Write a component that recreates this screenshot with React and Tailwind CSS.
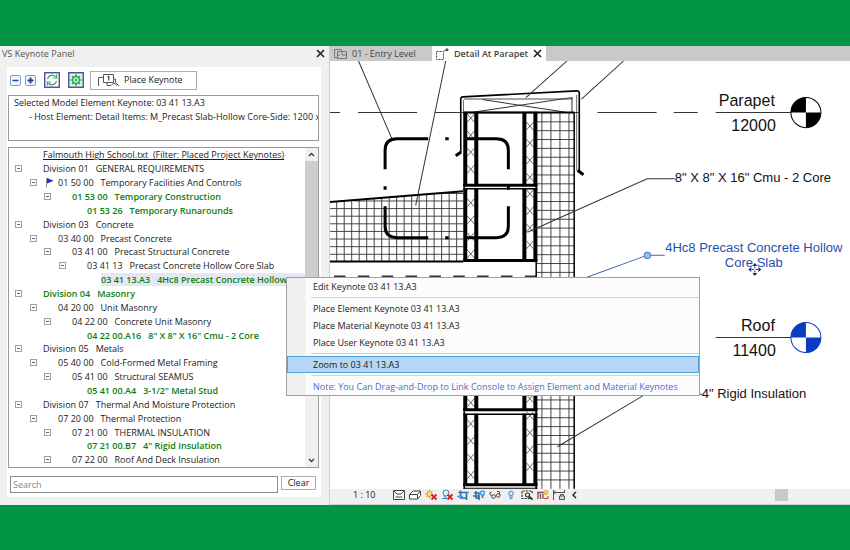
import clsx from "clsx";

const rows = [
  { level: 0, code: "Division 01", label: "GENERAL REQUIREMENTS", open: true },
  { level: 1, code: "01 50 00", label: "Temporary Facilities And Controls", open: true, flag: true },
  { level: 2, code: "01 53 00", label: "Temporary Construction", open: true, placed: true },
  { level: 3, code: "01 53 26", label: "Temporary Runarounds", placed: true },
  { level: 0, code: "Division 03", label: "Concrete", open: true },
  { level: 1, code: "03 40 00", label: "Precast Concrete", open: true },
  { level: 2, code: "03 41 00", label: "Precast Structural Concrete", open: true },
  { level: 3, code: "03 41 13", label: "Precast Concrete Hollow Core Slab", open: true },
  { level: 4, code: "03 41 13.A3", label: "4Hc8 Precast Concrete Hollow C", placed: true, selected: true },
  { level: 0, code: "Division 04", label: "Masonry", open: true, placed: true },
  { level: 1, code: "04 20 00", label: "Unit Masonry", open: true },
  { level: 2, code: "04 22 00", label: "Concrete Unit Masonry", open: true },
  { level: 3, code: "04 22 00.A16", label: '8" X 8" X 16" Cmu - 2 Core', placed: true },
  { level: 0, code: "Division 05", label: "Metals", open: true },
  { level: 1, code: "05 40 00", label: "Cold-Formed Metal Framing", open: true },
  { level: 2, code: "05 41 00", label: "Structural SEAMUS", open: true },
  { level: 3, code: "05 41 00.A4", label: '3-1/2" Metal Stud', placed: true },
  { level: 0, code: "Division 07", label: "Thermal And Moisture Protection", open: true },
  { level: 1, code: "07 20 00", label: "Thermal Protection", open: true },
  { level: 2, code: "07 21 00", label: "THERMAL INSULATION", open: true },
  { level: 3, code: "07 21 00.B7", label: '4" Rigid Insulation', placed: true },
  { level: 2, code: "07 22 00", label: "Roof And Deck Insulation", open: true },
];

const indents = ["pl-[6px]", "pl-[21px]", "pl-[35px]", "pl-[50px]", "pl-[64px]"];

function range(start, end, step) {
  const out = [];
  for (let v = start; v <= end; v += step) out.push(v);
  return out;
}

function CloseIcon() {
  return (
    <svg width="9" height="9" viewBox="0 0 9 9" stroke="#222" strokeWidth="1.6">
      <path d="M1 1L8 8M8 1L1 8" />
    </svg>
  );
}

function FlagIcon() {
  return (
    <svg width="9" height="11" viewBox="0 0 9 11">
      <path d="M1.5 1V10.5" stroke="#8a93a8" strokeWidth="1" />
      <path d="M2 1L8.5 3.7L2 6.5Z" fill="#1b2fc4" />
    </svg>
  );
}

function BoxIcon({ plus }) {
  return (
    <svg width="11" height="11" viewBox="0 0 11 11">
      <rect x="0.5" y="0.5" width="10" height="10" rx="1.5" fill="#f4f8ff" stroke="#7d9bd0" />
      <path d={plus ? "M2.5 5.5H8.5M5.5 2.5V8.5" : "M2.5 5.5H8.5"} stroke="#2a3fa8" strokeWidth={plus ? 2 : 1.5} />
    </svg>
  );
}

function RefreshIcon() {
  return (
    <svg width="16" height="16" viewBox="0 0 16 16" fill="none">
      <rect x="0.75" y="0.75" width="14.5" height="14.5" fill="#fff" stroke="#3e3e9c" strokeWidth="1.3" />
      <path d="M3.6 7A4.6 4.6 0 0 1 11.6 4.8M12.4 9A4.6 4.6 0 0 1 4.4 11.2" stroke="#3fa35f" strokeWidth="1.3" />
      <path d="M12.6 2.6V6H9.2M3.4 13.4V10H6.8" stroke="#3fa35f" strokeWidth="1.2" />
    </svg>
  );
}

function GearIcon() {
  return (
    <svg width="16" height="16" viewBox="0 0 16 16" fill="none">
      <rect x="0.75" y="0.75" width="14.5" height="14.5" fill="#dff5e4" stroke="#3e3e9c" strokeWidth="1.3" />
      <g stroke="#25ad4b">
        <circle cx="8" cy="8" r="3.4" strokeWidth="1.5" />
        <circle cx="8" cy="8" r="1.1" strokeWidth="1" />
        <path
          d="M8 2.3V4.4M8 11.6V13.7M2.3 8H4.4M11.6 8H13.7M4 4L5.4 5.4M10.6 10.6L12 12M12 4L10.6 5.4M5.4 10.6L4 12"
          strokeWidth="1.7"
        />
      </g>
    </svg>
  );
}

function PlaceIcon() {
  return (
    <svg width="22" height="14" viewBox="0 0 22 14" fill="none" stroke="#555" strokeWidth="1">
      <path d="M0.5 13V4.5H5" />
      <path d="M5.5 1.5H15.5V9.5H5.5Z" />
      <path d="M9.5 4L10.8 3V7.5" stroke="#222" />
      <path d="M9 9.5V12.5H13M15.5 6H17.5V9.5L21 13" />
      <path d="M13 12.5L15 10.5H17L18.5 12.5" />
    </svg>
  );
}

function TreeRow({ row }) {
  return (
    <li className={clsx("flex flex-1 items-center leading-[13px] whitespace-nowrap", indents[row.level])}>
      {row.open ? (
        <button type="button" aria-label="Collapse" className="h-[7px] w-[7px] shrink-0 border border-[#9aa0ac] bg-white">
          <span className="mx-auto block h-px w-[3px] bg-[#666]" />
        </button>
      ) : (
        <span className="w-[7px] shrink-0" />
      )}
      <span className="ml-2 flex w-[13px] shrink-0">{row.flag && <FlagIcon />}</span>
      <span
        className={clsx(
          "flex gap-[7px]",
          row.placed && "font-semibold text-[#0a800a]",
          row.selected && "min-w-0 flex-1 bg-[#e6e6f5]"
        )}
      >
        <span>{row.code}</span>
        <span>{row.label}</span>
      </span>
    </li>
  );
}

function KeynotePanel() {
  return (
    <aside className="flex w-[330px] shrink-0 flex-col border-r border-[#cfcfcf] bg-[#f0f0f0]">
      <header className="flex h-[21px] items-center justify-between pr-1 pb-[6px] pl-[2px] text-[#555]">
        <h1>VS Keynote Panel</h1>
        <button type="button" aria-label="Close panel">
          <CloseIcon />
        </button>
      </header>

      <div className="mr-2 mb-2 ml-[7px] flex flex-1 flex-col bg-white pr-[2px] pb-1 pl-px">
        <div className="flex h-7 items-center pb-[2px] pl-[2px]">
          <button type="button" aria-label="Collapse all">
            <BoxIcon />
          </button>
          <button type="button" aria-label="Expand all" className="ml-1">
            <BoxIcon plus />
          </button>
          <button type="button" aria-label="Refresh" className="ml-2">
            <RefreshIcon />
          </button>
          <button type="button" aria-label="Settings" className="ml-2">
            <GearIcon />
          </button>
          <button
            type="button"
            className="ml-[6px] flex h-[19px] w-[107px] items-center gap-1 border border-[#adadad] pl-[7px]"
          >
            <PlaceIcon />
            Place Keynote
          </button>
        </div>

        <div className="h-[46px] overflow-hidden border border-[#9a9a9a] pl-[5px] leading-[14px] whitespace-nowrap">
          <p>Selected Model Element Keynote: 03 41 13.A3</p>
          <p className="pl-[15px]">- Host Element: Detail Items: M_Precast Slab-Hollow Core-Side: 1200 x 2</p>
        </div>

        <div className="mt-[6px] flex flex-1 border border-[#9a9a9a]">
          <ul className="flex min-w-0 flex-1 flex-col">
            <li className="flex flex-1 items-center pl-[34px] leading-[13px] whitespace-pre underline">
              Falmouth High School.txt  (Filter: Placed Project Keynotes)
            </li>
            {rows.map((row) => (
              <TreeRow key={row.code} row={row} />
            ))}
          </ul>
          <div className="flex w-[13px] flex-col items-center justify-between bg-[#f0f0f0]">
            <svg width="13" height="13" viewBox="0 0 13 13" fill="none" stroke="#444" strokeWidth="1.5">
              <path d="M4 8L6.5 5.5L9 8" />
            </svg>
            <div className="mb-auto h-[140px] w-full bg-[#cdcdcd]" />
            <svg width="13" height="13" viewBox="0 0 13 13" fill="none" stroke="#444" strokeWidth="1.5">
              <path d="M4 5L6.5 7.5L9 5" />
            </svg>
          </div>
        </div>

        <div className="mt-2 flex items-start gap-[3px] pr-[3px] pl-[2px]">
          <input
            type="text"
            placeholder="Search"
            aria-label="Search"
            className="h-[17px] min-w-0 flex-1 border border-[#8c8c8c] px-[2px] placeholder:text-[#888]"
          />
          <button type="button" className="h-[14px] w-[35px] border border-[#adadad] leading-[12px]">
            Clear
          </button>
        </div>
      </div>
    </aside>
  );
}

function Block({ top, bottom }) {
  const height = bottom - top;
  return (
    <g>
      {[464, 475, 523, 534].map((x) => (
        <rect key={x} x={x} y={top} width="4" height={height} fill="#000" />
      ))}
      <path d={`M464 ${top + 0.5}H538`} stroke="#000" strokeWidth="1.5" />
      <path d={`M464 ${bottom - 1}H538`} stroke="#000" strokeWidth="3" />
    </g>
  );
}

function Crosses({ x, ys }) {
  return <path d={ys.map((y) => `M${x - 3.5} ${y - 4}l7 8m0 -8l-7 8`).join("")} stroke="#444" strokeWidth="0.8" />;
}

function LevelHead({ y, color, name, value }) {
  return (
    <g>
      <path d={`M716 ${y}H791`} stroke="#333" />
      <circle cx="806" cy={y} r="15" fill="#fff" stroke={color} strokeWidth="1" />
      <path d={`M806 ${y}V${y - 15}A15 15 0 0 0 791 ${y}ZM806 ${y}V${y + 15}A15 15 0 0 0 821 ${y}Z`} fill={color} />
      <g fontSize="16" textAnchor="end" fill="#111">
        <text x="775" y={y - 7}>
          {name}
        </text>
        <text x="776" y={y + 18}>
          {value}
        </text>
      </g>
    </g>
  );
}

function ParapetDetail() {
  const slabTop = (x) => 201.7 - (x - 331) * 0.08;

  return (
    <svg
      viewBox="331 61 519 427"
      preserveAspectRatio="xMinYMin slice"
      className="min-h-0 w-full flex-1 bg-white font-['Liberation_Sans',Arial,sans-serif]"
      fill="none"
      role="img"
      aria-label="Detail at parapet"
    >
      {/* slab hatch */}
      <g stroke="#333" strokeWidth="0.9">
        {range(337.7, 463, 7.48).map((x) => (
          <path key={x} d={`M${x} ${slabTop(x)}V261`} />
        ))}
        {range(208.3, 260, 7.6).map((y) => (
          <path key={y} d={`M331 ${y}H464`} />
        ))}
        <path d="M355 200.7H464M440 193.2H464" />
      </g>
      <path d="M331 201.7L464 191M331 261H464" stroke="#000" strokeWidth="2" />
      <path d="M335 275.8H537" stroke="#333" strokeWidth="1.5" strokeDasharray="11.5 12.3" />

      {/* rigid insulation */}
      <g stroke="#333" strokeWidth="0.9">
        {[542.5, 551.5, 560.5, 569.5].map((x) => (
          <path key={x} d={`M${x} 112V488`} />
        ))}
        {range(121.7, 280, 8.84).map((y) => (
          <path key={y} d={`M537 ${y}H575`} />
        ))}
        {range(399.3, 487, 8.87).map((y) => (
          <path key={y} d={`M537 ${y}H575`} />
        ))}
      </g>
      <path d="M536.8 112V488M574.7 112V488" stroke="#000" strokeWidth="1.5" />

      {/* masonry */}
      <Crosses x={471.5} ys={range(118, 180, 17)} />
      <Crosses x={530.5} ys={range(126, 180, 17)} />
      <Crosses x={471.5} ys={range(202.5, 257, 17)} />
      <Crosses x={530.5} ys={range(193.5, 257, 17)} />
      <Crosses x={471.5} ys={[402, 423, 440, 457, 474]} />
      <Crosses x={530.5} ys={[398, 415, 432, 449, 466]} />
      <Block top={112} bottom={186} />
      <Block top={188} bottom={261} />
      <Block top={380} bottom={410} />
      <Block top={413} bottom={485} />
      <path d="M464 487.5H538" stroke="#000" />
      <path d="M465 184V190M537 184V190M465 408V414M537 408V414M465 484V488M537 484V488" stroke="#000" strokeWidth="1.5" />

      {/* coping */}
      <path d="M461.5 153V99Q461.5 97 463.5 96.8L577 90.8Q579.8 90.6 579.8 93V170" stroke="#000" strokeWidth="1.6" />
      <path d="M464.2 152V100M577.2 95V170" stroke="#444" strokeWidth="0.8" />
      <path d="M464.5 99H573" stroke="#888" strokeWidth="1.5" />
      <path d="M483 99.5L565 112M475 112L572.5 97.5V112" stroke="#333" strokeWidth="1" />
      <path d="M456.5 155.5L461.5 152M578 170L584 174.5" stroke="#000" strokeWidth="3" />
      <path d="M464 112.5H575" stroke="#000" strokeWidth="2" />

      {/* callout boundary */}
      <g stroke="#000" strokeWidth="3">
        <path d="M386 169V150Q386 138.5 398 138.5H429M466 138.5H497Q509 138.5 509 150V169" />
        <path d="M386 206V226Q386 237.3 398 237.3H429M466 237.3H497Q509 237.3 509 226V206" />
        <path d="M386 186V189.5M509 185V189.5M446 138.5H449.5M446 237.3H449.5" />
      </g>

      {/* leaders */}
      <g stroke="#333">
        <path d="M331 112.5H341M359 112.5H418M436 112.5H464M575 112.5H580M598 112.5H657M674 112.5H698" />
        <path d="M359.5 61L392.5 138M446.5 61L416.5 205M567.5 61L526.5 97.5M624 61L582 99" />
        <path d="M675 178.5H647.5L528 232M702 393.5H646L558 446" />
      </g>

      <LevelHead y={112.5} color="#000" name="Parapet" value="12000" />
      <LevelHead y={337} color="#0a3cc0" name="Roof" value="11400" />

      <g fontSize="13" fill="#111">
        <text x="675" y="182">8" X 8" X 16" Cmu - 2 Core</text>
        <text x="702" y="397">4" Rigid Insulation</text>
      </g>
      <g fontSize="13" fill="#1f4fae" textAnchor="middle">
        <text x="754" y="251.5">4Hc8 Precast Concrete Hollow</text>
        <text x="754" y="267">Core Slab</text>
      </g>
      <path d="M665 255H651M644.5 256L584 278" stroke="#3f68b5" />
      <circle cx="647.8" cy="255" r="3.2" fill="#9dbcf0" stroke="#4a74c4" />

      {/* move cursor */}
      <g fill="#1a2c6e">
        <path d="M755 262.5L757.5 265.5H752.5ZM755 275.5L757.5 272.5H752.5ZM748.5 269L751.5 266.5V271.5ZM761.5 269L758.5 266.5V271.5Z" />
        <path d="M754.5 266h1v2h-1zM754.5 270h1v2h-1zM752 268.5h2v1h-2zM756 268.5h2v1h-2z" />
      </g>
    </svg>
  );
}

const viewTools = [
  {
    name: "Detail level",
    art: (
      <g stroke="#444">
        <path d="M0.5 1.5H11.5V10.5H0.5Z" fill="#fff" />
        <path d="M1 2L4 5H8L11 2M2.5 8H9.5" />
      </g>
    ),
  },
  {
    name: "Visual style",
    art: <path d="M0.5 5.5L4 2H11.5V6.5L8.5 10H0.5ZM0.5 5.5H8.5V10M8.5 5.5L11.5 2" fill="#fff" stroke="#444" />,
  },
  {
    name: "Sun path off",
    art: (
      <g>
        <circle cx="4.5" cy="5" r="2.5" fill="#ffe27a" stroke="#d79a1c" />
        <path d="M4.5 0.5V2M0 5H1.5M1.5 2L2.5 3M7.5 2L6.5 3M1.5 8L2.5 7M4.5 8V9.5" stroke="#d79a1c" />
        <path d="M6.5 5.5L11.5 10.5M11.5 5.5L6.5 10.5" stroke="#d3201c" strokeWidth="1.8" />
      </g>
    ),
  },
  {
    name: "Shadows off",
    art: (
      <g>
        <circle cx="5" cy="4" r="3" fill="#eaf4ff" stroke="#3f81bd" />
        <path d="M1 9.5H6L3 7" stroke="#3f81bd" />
        <path d="M6.5 5.5L11.5 10.5M11.5 5.5L6.5 10.5" stroke="#d3201c" strokeWidth="1.8" />
      </g>
    ),
  },
  {
    name: "Crop view",
    art: (
      <g stroke="#2f6fa8" strokeWidth="1.6">
        <path d="M3.5 1.5V9H10M1.5 3.5H9.5V11" />
        <path d="M0 7.5H6M9.5 3.5H12" stroke="#4f9bd8" />
      </g>
    ),
  },
  {
    name: "Show crop region",
    art: (
      <g stroke="#2f6fa8" strokeWidth="1.5">
        <path d="M3 2V9H7M0 7H6M1 4H6V11" />
        <circle cx="9.5" cy="4" r="2" fill="#dff0ff" stroke="#4f9bd8" />
        <path d="M9.5 6V9" />
      </g>
    ),
  },
  {
    name: "Temporary hide",
    art: (
      <g stroke="#444">
        <circle cx="4.5" cy="7.5" r="1.8" />
        <circle cx="9.3" cy="6.5" r="1.8" />
        <path d="M2.7 7L0.5 4L2.5 3M11 6L10 2.5L8 2.5M6.3 7.2L7.5 6.8" />
      </g>
    ),
  },
  {
    name: "Reveal hidden",
    art: (
      <g fill="#d7ecff" stroke="#3f8ccc">
        <circle cx="6" cy="4.5" r="2.3" />
        <path d="M5 7V9.5H7V7" />
      </g>
    ),
  },
  {
    name: "Temporary view properties",
    art: (
      <g stroke="#333" strokeWidth="1.2">
        <path d="M9 9.5H1V2H11V5" strokeDasharray="2.2 1" />
        <circle cx="6.5" cy="6" r="2" />
        <path d="M8 7.5L11.5 10.5" strokeWidth="1.8" />
      </g>
    ),
  },
  {
    name: "Analytical model",
    art: (
      <g>
        <path d="M1 10V3.5H8M3.5 10V5M6 10V5" stroke="#7a4c4c" strokeWidth="1.3" />
        <circle cx="9" cy="3.5" r="2" fill="#ffd95e" stroke="#e0a422" />
        <path d="M7 9.5H11V7" stroke="#c43a2c" />
      </g>
    ),
  },
  {
    name: "Reveal constraints",
    art: (
      <g stroke="#555">
        <path d="M0.5 1V11M0.5 3.5H11.5M11.5 1V4M2.5 2L0.8 3.5L2.5 5" />
        <path d="M6.5 7H11.5V10.5H6.5ZM7.5 7V5.5H10.5V7" fill="#ddd" />
      </g>
    ),
  },
  { name: "Scroll left", art: <path d="M7 3L4 6L7 9" stroke="#222" strokeWidth="1.4" /> },
];

function DrawingView() {
  return (
    <main className="flex min-w-0 flex-1 flex-col">
      <nav className="flex h-[15px] items-stretch bg-[#c9c9c9] whitespace-nowrap text-[#444]">
        <button type="button" className="flex w-[102px] items-center gap-[5px] pl-1">
          <svg width="13" height="11" viewBox="0 0 13 11" fill="none" stroke="#777">
            <path d="M3.5 9.5H0.5V1.5H7.5V3" />
            <path d="M3.5 3.5H12.5V10.5H3.5ZM8 3.5V7H12.5M3.5 7H6" />
          </svg>
          01 - Entry Level
        </button>
        <div className="flex w-[114px] items-center justify-between bg-white pr-1 pl-1">
          <button type="button" className="flex items-center gap-[5px] font-semibold">
            <svg width="13" height="12" viewBox="0 0 13 12" fill="none">
              <path d="M0.5 3.5H7.5V11.5H0.5Z" stroke="#444" strokeDasharray="2 1" />
              <path d="M8 3L10 2" stroke="#555" />
              <circle cx="11" cy="1.8" r="1.5" fill="#555" />
            </svg>
            Detail At Parapet
          </button>
          <button type="button" aria-label="Close tab">
            <CloseIcon />
          </button>
        </div>
      </nav>

      <ParapetDetail />

      <footer className="flex h-4 items-center border-b border-[#cfcfcf] bg-[#f0f0f0] pb-[3px]">
        <span className="w-[63px] pl-[23px] whitespace-nowrap">1 : 10</span>
        <div className="flex gap-1">
          {viewTools.map((tool) => (
            <button key={tool.name} type="button" aria-label={tool.name}>
              <svg width="12" height="12" viewBox="0 0 12 12" fill="none">
                {tool.art}
              </svg>
            </button>
          ))}
        </div>
        <div className="flex h-3 flex-1 justify-end pr-[62px]">
          <div className="w-[13px] bg-[#c9c9c9]" />
        </div>
      </footer>
    </main>
  );
}

function MenuItem({ children, active, note }) {
  return (
    <button
      type="button"
      role="menuitem"
      className={clsx(
        "block h-[17px] w-full border pl-[25px] text-left leading-[15px]",
        active ? "border-[#4ba3d6] bg-[#b5d7f3]" : "border-transparent",
        note && "text-[#4f6fc4]"
      )}
    >
      {children}
    </button>
  );
}

function MenuRule() {
  return <hr className="my-[2px] ml-[24px] border-t border-[#d0d0d0]" />;
}

function ContextMenu() {
  return (
    <div
      role="menu"
      className="absolute top-[231px] left-[286px] w-[414px] border border-[#a0a0a0] bg-[#fcfcfc] bg-linear-to-r from-[#f0f0f0] from-[18px] to-[#fcfcfc] to-[19px] whitespace-nowrap"
    >
      <MenuItem>Edit Keynote 03 41 13.A3</MenuItem>
      <MenuRule />
      <MenuItem>Place Element Keynote 03 41 13.A3</MenuItem>
      <MenuItem>Place Material Keynote 03 41 13.A3</MenuItem>
      <MenuItem>Place User Keynote 03 41 13.A3</MenuItem>
      <MenuRule />
      <MenuItem active>Zoom to 03 41 13.A3</MenuItem>
      <MenuRule />
      <MenuItem note>Note: You Can Drag-and-Drop to Link Console to Assign Element and Material Keynotes</MenuItem>
    </div>
  );
}

function App() {
  return (
    <div className="flex min-h-screen flex-col bg-[#029544] py-[46px] font-['Open_Sans','Noto_Sans',sans-serif] text-[9px] text-[#1a1a1a]">
      <div className="relative flex flex-1">
        <KeynotePanel />
        <DrawingView />
        <ContextMenu />
      </div>
    </div>
  );
}

export default App;
